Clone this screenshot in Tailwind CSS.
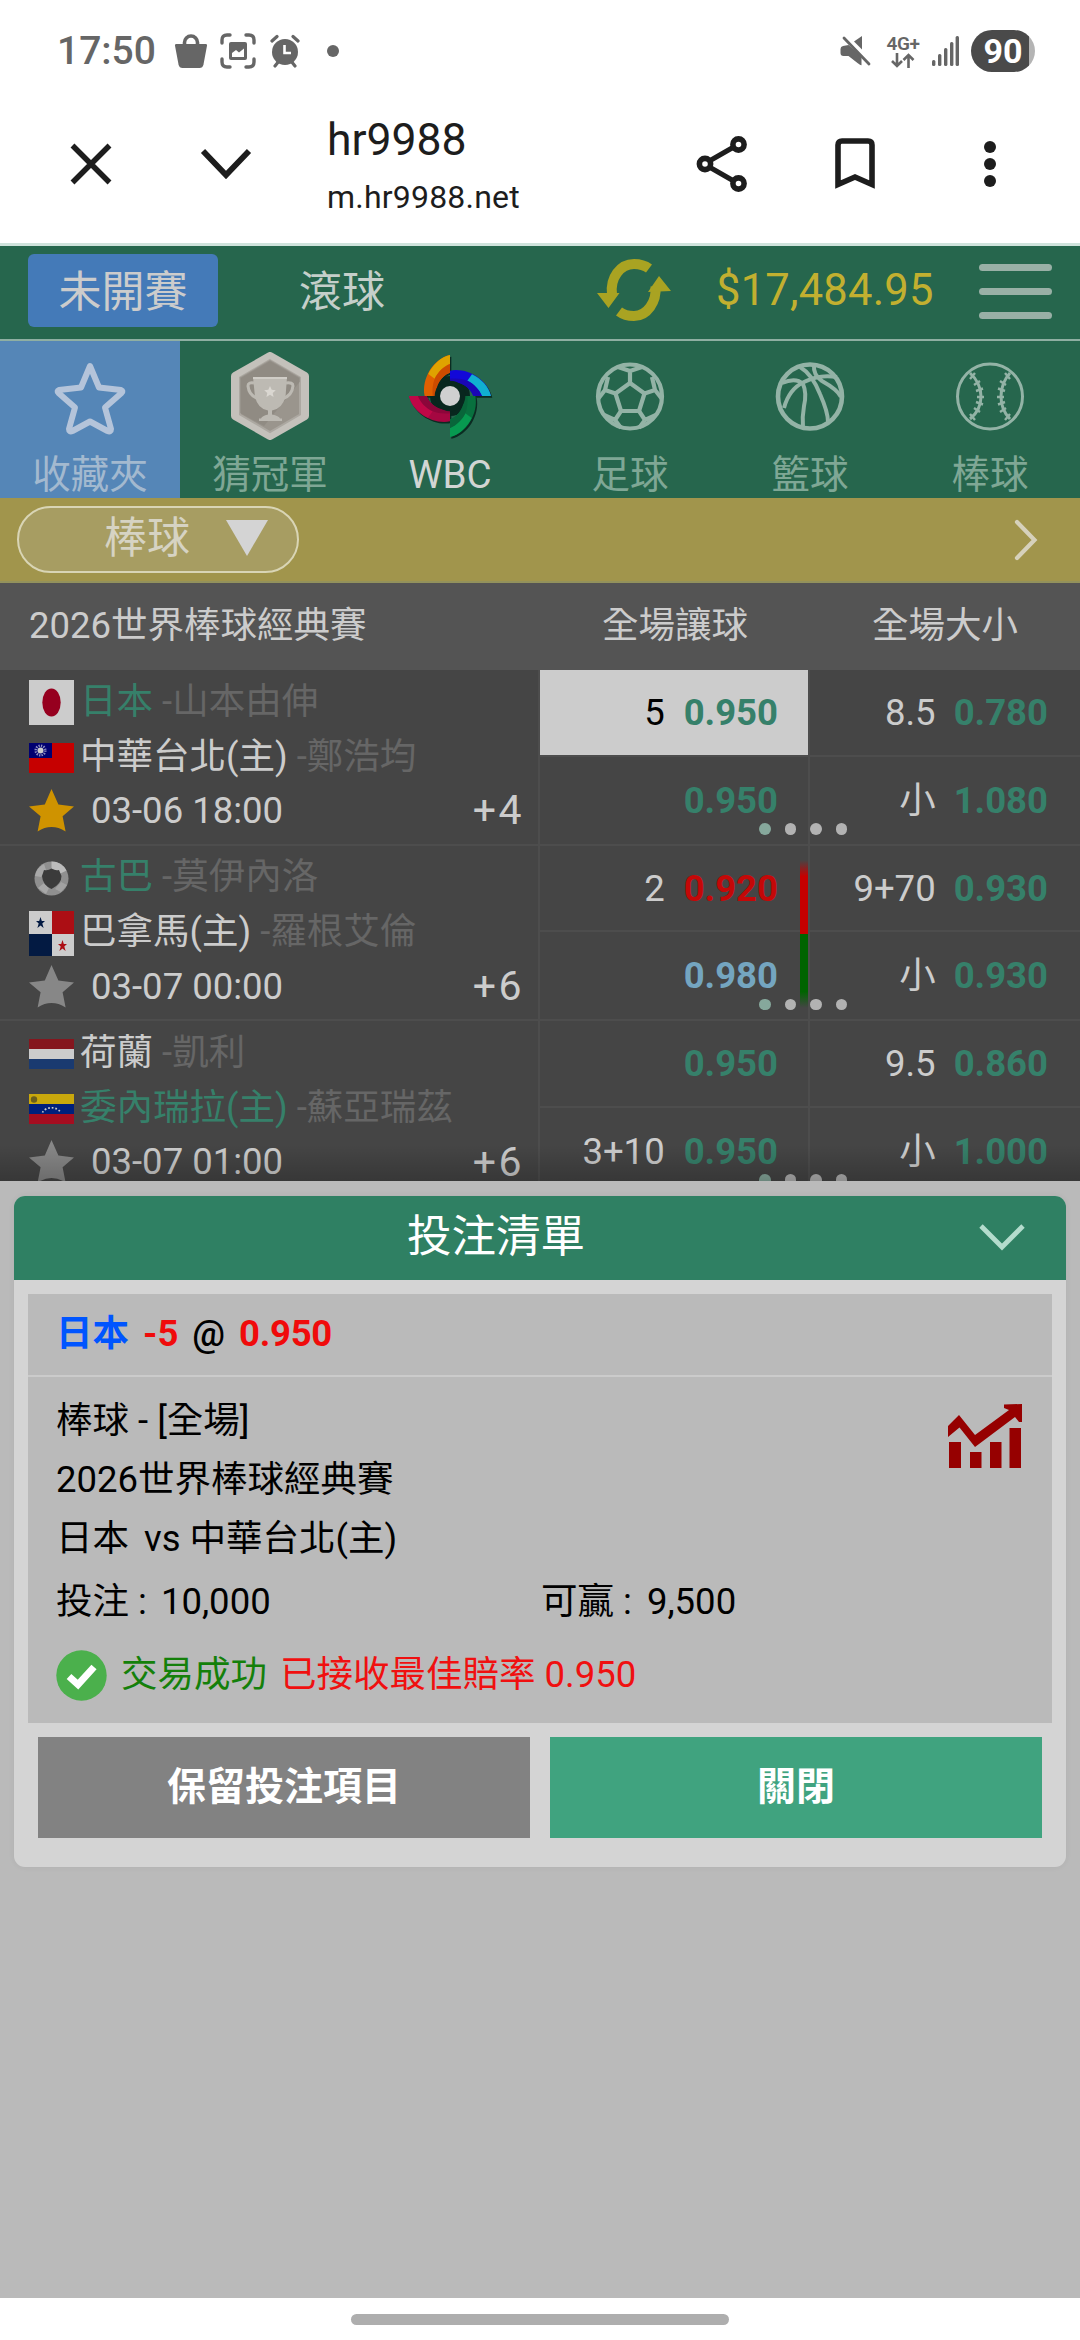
<!DOCTYPE html>
<html lang="zh-Hant">
<head>
<meta charset="utf-8">
<meta name="viewport" content="width=1080">
<title>hr9988</title>
<script src="https://cdn.jsdelivr.net/npm/@tailwindcss/browser@4"></script>
</head>
<body class="bg-white">
<svg class="hidden">
  <defs>
    <symbol id="star" viewBox="0 0 45 43"><path d="M22.5 0 L29.4 15.6 L45 17.4 L33.6 27.2 L36.6 42.5 Q22.5 33.6 8.6 42.5 L11.6 27.2 L0 17.4 L15.8 15.6 Z" fill="currentColor"/></symbol>
    <g id="blade-base"><path d="M0,-123 C-50,-112 -86,-52 -76,0 L-46,0 C-46,-30 -25,-62 0,-70 Z"/></g>
    <path id="blade-tip" d="M0,-123 C-28,-117 -53,-92 -65,-66 L-46,-52 C-36,-72 -20,-88 0,-96 Z"/>
    <path id="blade-in" d="M-46,-52 C-36,-72 -20,-88 0,-96 L0,-70 C-25,-62 -42,-35 -44,0 L-52,0 C-54,-20 -52,-36 -46,-52 Z"/>
  </defs>
</svg>
<div class="w-[1080px] h-[2340px] overflow-hidden flex flex-col font-[Roboto,'Noto_Sans_CJK_TC',sans-serif]">

  <!-- Status bar -->
  <header class="h-[102px] flex items-center shrink-0 text-[#666]">
    <div class="w-[98px] ml-[57px] text-[39px] leading-none font-medium whitespace-nowrap">17:50</div>
    <svg class="ml-[19px]" width="34" height="36" viewBox="0 0 34 36"><path d="M2 11h30q1.200 0 1 1.500l-3.500 19q-.8 3.500-4 3.500h-17q-3.200 0-4-3.500l-3.500-19Q.8 11 2 11z" fill="#666"/><path d="M10.500 13V9.500a6.500 6.500 0 0 1 13 0V13" fill="none" stroke="#666" stroke-width="3.600"/></svg>
    <svg class="ml-[12px]" width="36" height="36" viewBox="0 0 36 36"><path d="M2 10V7q0-5 5-5h3M26 2h3q5 0 5 5v3M34 26v3q0 5-5 5h-3M10 34H7q-5 0-5-5v-3" fill="none" stroke="#666" stroke-width="3.400" stroke-linecap="round"/><rect x="9" y="9" width="18" height="18" rx="2" fill="#666"/><path d="M12 24v-4l4-3 3 2.500 5-4V24z" fill="#fff"/></svg>
    <svg class="ml-[14px]" width="30" height="34" viewBox="0 0 30 34"><circle cx="15" cy="18" r="13" fill="#666"/><path d="M2 7l5-4.500M28 7l-5-4.500M5 32l4-5M25 32l-4-5" stroke="#666" stroke-width="3.200" stroke-linecap="round"/><path d="M14.500 11v8h6.500" stroke="#fff" stroke-width="2.600" fill="none"/></svg>
    <span class="ml-[27px] w-3 h-3 rounded-full bg-[#666]"></span>
    <svg class="ml-[501px]" width="32" height="32" viewBox="0 0 32 32" fill="#666"><path d="M3 11q-2.500.5-2.500 3v4q0 3 3 3h5l9 7q4 3 4 2v-9L8.500 10zM14 6.500L22 1v13.500z"/><path d="M4 3l25 26" stroke="#666" stroke-width="2.800" stroke-linecap="round"/></svg>
    <div class="ml-[14px] w-[34px] flex flex-col items-center">
      <span class="text-[19px] leading-[18px] font-semibold tracking-[-0.5px]">4G+</span>
      <svg width="26" height="15" viewBox="0 0 26 15"><path d="M7 0v13M2 8l5 5 5-5M18.500 15V2M13.500 7l5-5 5 5" fill="none" stroke="#666" stroke-width="2.600"/></svg>
    </div>
    <svg class="ml-[12px]" width="28" height="30" viewBox="0 0 28 30" fill="#666"><rect y="24" width="3.400" height="6" rx="1.500"/><rect x="6" y="18" width="3.400" height="12" rx="1.500"/><rect x="12" y="12" width="3.400" height="18" rx="1.500"/><rect x="18" y="6" width="3.400" height="24" rx="1.500"/><rect x="23.600" y="0" width="3.400" height="30" rx="1.500"/></svg>
    <div class="ml-[11px] w-[64px] h-[42px] rounded-full bg-linear-to-r from-[#4a4a4a] from-[90%] to-[#b4b4b4] to-[90%] flex items-center justify-center text-white font-bold text-[34px] leading-none">90</div>
  </header>

  <!-- Browser toolbar -->
  <div class="h-[141px] flex shrink-0 text-[#1d1d1d]">
    <svg class="ml-[70px] mt-[41px]" width="42" height="42" viewBox="0 0 42 42"><path d="M2.500 2.500l37 37M39.500 2.500l-37 37" stroke="currentColor" stroke-width="5.500"/></svg>
    <svg class="ml-[88px] mt-[45px]" width="52" height="34" viewBox="0 0 52 34"><path d="M3 4l23 24L49 4" stroke="currentColor" stroke-width="5.800" fill="none"/></svg>
    <div class="ml-[75px] w-[340px] flex flex-col">
      <span class="mt-[12px] text-[44.500px] leading-[52px]">hr9988</span>
      <span class="mt-[11px] text-[32px] leading-[40px] tracking-[0.2px]">m.hr9988.net</span>
    </div>
    <svg class="ml-[28px] mt-[32px]" width="54" height="60" viewBox="0 0 54 60" fill="none" stroke="currentColor"><path d="M44 10L9 30l35 20" stroke-width="5"/><g fill="#fff" stroke-width="5.600"><circle cx="10" cy="30" r="5.600"/><circle cx="43.500" cy="10.500" r="5.600"/><circle cx="43.500" cy="49.500" r="5.600"/></g></svg>
    <svg class="ml-[86px] mt-[36px]" width="40" height="52" viewBox="0 0 40 52"><path d="M3 46.500V7q0-4 4-4h26q4 0 4 4v39.500L20 39z" fill="none" stroke="currentColor" stroke-width="5.600"/></svg>
    <svg class="ml-[109px] mt-[38px]" width="12" height="48" viewBox="0 0 12 48" fill="currentColor"><circle cx="6" cy="7" r="6"/><circle cx="6" cy="24" r="6"/><circle cx="6" cy="41" r="6"/></svg>
  </div>

  <!-- Site header -->
  <div class="h-[98px] shrink-0 border-t-3 border-t-[#cfe3dc] border-b-2 border-b-[#8fafa2] bg-[#26664d] flex items-center box-border text-[43px] text-[#c5cfca]">
    <div class="ml-[28px] w-[190px] h-[73px] -mt-[4px] pt-[4px] rounded-[6px] bg-[#447ab8] flex items-center justify-center text-[#ccc]">未開賽</div>
    <div class="ml-[81px] w-[90px]">滾球</div>
    <svg class="ml-[208px] -mt-[5px]" width="74" height="64" viewBox="0 0 74 64"><path d="M15 36C13 20 23 6 37 6q9 0 15 4.500M58.500 28C60 44 50 58 37 58q-9 0-15-4.500" fill="none" stroke="#a9a322" stroke-width="10"/><path d="M0 35h22.500L11.500 50zM51 34L62 18l12 15z" fill="#a9a322"/></svg>
    <div class="ml-[45px] w-[218px] -mt-[4px] text-[#c2b030] text-[43.500px] tracking-[0.2px]">$17,484.95</div>
    <div class="ml-[45px] w-[73px] -mt-[3px] flex flex-col gap-[17px]">
      <i class="h-[7px] rounded-full bg-[#99b0a6]"></i><i class="h-[7px] rounded-full bg-[#99b0a6]"></i><i class="h-[7px] rounded-full bg-[#99b0a6]"></i>
    </div>
  </div>

  <!-- Sport tabs -->
  <nav class="h-[157px] shrink-0 bg-[#26664d] grid grid-cols-6 text-[38.500px] text-[#7fa795] text-center overflow-hidden">
    <div class="bg-[#5586b7] text-[#a3b9cf] flex flex-col items-center">
      <svg class="mt-[11px] h-[88px]" width="88" height="88" viewBox="0 0 88 88"><path d="M44 14l9 21.500 22 2.500q2.500 1 .5 3L59 55.500l6 21.500q0 3.500-3.500 2L44 69.500 26.500 79q-3.500 1.500-3.500-2l6-21.500L12.500 41q-2-2 .5-3l22-2.500z" fill="none" stroke="#b4c4da" stroke-width="6" stroke-linejoin="round"/></svg>
      <span class="leading-[50px] mt-[10px]">收藏夾</span>
    </div>
    <div class="flex flex-col items-center">
      <svg class="mt-[11px] h-[88px]" width="78" height="88" viewBox="0 0 78 88"><path d="M39 4L74 24v40L39 84 4 64V24z" fill="#b9b6b0" stroke="#c4c1bb" stroke-width="8" stroke-linejoin="round"/><path d="M39 8L69 25.500v37L39 80 9 62.500v-37z" fill="#9a958d" stroke="#aca8a1" stroke-width="2"/><path d="M39 8l30 17.500v4L33 74 9 61V25.500z" fill="#88837c" opacity=".55"/><path d="M23 31q-6-1-6 3 1 10 11 13M55 31q7-1 7 3-1 10-11 13" fill="none" stroke="#bdbab3" stroke-width="3"/><path d="M22 25h34l-1.500 20Q51 57 41 58.500v4q7 1.500 8 4h2V69H28v-2.500h2q1-2.500 7-4v-4Q27 57 24 45z" fill="#bdbab3"/><path d="M22 26h34" stroke="#d0cdc7" stroke-width="2"/><path d="M39 34l1.700 3.800 4.100.4-3.100 2.700.9 4-3.600-2.100-3.600 2.100.9-4-3.100-2.700 4.100-.4z" fill="#dad7d1"/></svg>
      <span class="leading-[50px] mt-[10px]">猜冠軍</span>
    </div>
    <div class="flex flex-col items-center text-[#d2d5d3]">
      <svg class="mt-[11px] h-[88px]" width="88" height="88" viewBox="-132 -132 264 264">
        <g fill="#0b2c22" transform="translate(4,5)"><use href="#blade-base"/><use href="#blade-base" transform="rotate(90)"/><use href="#blade-base" transform="rotate(180)"/><use href="#blade-base" transform="rotate(270)"/></g>
        <circle r="60" fill="#08271e"/>
        <g fill="#e06000"><use href="#blade-base"/></g><use href="#blade-tip" fill="#dfa300"/><use href="#blade-in" fill="#cc4c00"/>
        <g transform="rotate(90)"><g fill="#1208d8"><use href="#blade-base"/></g><use href="#blade-tip" fill="#10b0d0"/><use href="#blade-in" fill="#1a06b4"/></g>
        <g transform="rotate(180)"><g fill="#08703e"><use href="#blade-base"/></g><use href="#blade-tip" fill="#079a50"/><use href="#blade-in" fill="#08663a"/></g>
        <g transform="rotate(270)"><g fill="#a50741"><use href="#blade-base"/></g><use href="#blade-tip" fill="#c00747"/><use href="#blade-in" fill="#8c063a"/></g>
        <circle r="46" fill="#08271e"/>
        <circle r="30" fill="#d0d0d0"/>
      </svg>
      <span class="leading-[50px] mt-[10px]">WBC</span>
    </div>
    <div class="flex flex-col items-center">
      <svg class="mt-[11px] h-[88px]" width="88" height="88" viewBox="0 0 88 88" fill="none" stroke="#93b3a6" stroke-width="4.200" stroke-linejoin="round"><circle cx="44" cy="44.500" r="32"/><path d="M44 31l14.500 10.500L53 59H35l-5.500-17.500z"/><path d="M44 31V19M58.500 41.500L69 38M53 59l6 9M35 59l-6 9M29.500 41.500L19 38M32 15l12 4 12-4M69 38l-3-13M69 38l7 9M59 68l11-5M59 68l-6 8M29 68l-11-5M29 68l6 8M19 38l-7 9M19 38l3-13"/></svg>
      <span class="leading-[50px] mt-[10px]">足球</span>
    </div>
    <div class="flex flex-col items-center">
      <svg class="mt-[11px] h-[88px]" width="88" height="88" viewBox="0 0 88 88" fill="none" stroke="#93b3a6" stroke-width="4"><circle cx="44" cy="44.500" r="32" stroke-width="4.600"/><path d="M16 31q14-6 21 1 4 9 1 22-2 11-1 22M34 15q12 7 20 27 8 18 8 28M48 13q-1 10 8 16 16 9 19 16M18 56q5-19 20-26 15-8 33-5"/></svg>
      <span class="leading-[50px] mt-[10px]">籃球</span>
    </div>
    <div class="flex flex-col items-center">
      <svg class="mt-[11px] h-[88px]" width="88" height="88" viewBox="0 0 88 88" fill="none" stroke="#93b3a6" stroke-width="3"><circle cx="44" cy="44.500" r="32.500"/><path d="M24 21q11 10 11 23.500T24 67M64 21q-9 10-9 23.500T64 67"/><path d="M24 27l5-6M28 33l6-4M30 39l7-2.500M31 45h7M30 50l7 2.500M28 56l6 4M24 62l5 6M64 27l-5-6M60 33l-6-4M59 39l-7-2.500M58 45h-7M59 50l-7 2.500M60 56l-6 4M64 62l-5 6" stroke-width="2.400"/></svg>
      <span class="leading-[50px] mt-[10px]">棒球</span>
    </div>
  </nav>

  <!-- Sport filter -->
  <div class="h-[85px] shrink-0 bg-[#a1954c] border-b-2 border-[#93925c] flex items-center justify-between">
    <div class="ml-[17px] w-[282px] h-[67px] rounded-full border-2 border-[#d9d5b5] bg-[#a79d62] flex items-center text-[#d6d3c3] text-[43px]">
      <span class="ml-[85px] -mt-[2px]">棒球</span>
      <svg class="ml-[36px] -mt-[3px]" width="42" height="36" viewBox="0 0 42 36"><path d="M0 0h42L21 36z" fill="#d4d4d4"/></svg>
    </div>
    <svg class="mr-[42px]" width="24" height="42" viewBox="0 0 24 42"><path d="M3 3l17.500 18L3 39" fill="none" stroke="#d6d1bb" stroke-width="4.200" stroke-linecap="round"/></svg>
  </div>

  <!-- Odds table -->
  <div class="relative h-[598px] shrink-0 overflow-hidden bg-[#454545] text-[36.500px] text-[#ccc]">
    <div class="h-[87px] bg-[#545454] grid grid-cols-[540px_270px_270px] items-center text-center leading-[60px]">
      <div class="pl-[29px] pb-px text-left">2026世界棒球經典賽</div><div class="pb-px">全場讓球</div><div class="pb-px">全場大小</div>
    </div>

    <div class="relative grid grid-cols-[540px_270px_270px] h-[175.500px]">
      <div class="border-r-2 border-b-2 border-[#4d4d4d] pl-[29px] pt-[3px] leading-[55px]">
        <div class="h-[55px] flex items-center gap-[6px] whitespace-pre"><svg width="45" height="45" class="mt-1"><path d="M0 0h45v45H0z" fill="#ccc"/><ellipse cx="22.500" cy="22.500" rx="9.200" ry="14" fill="#96001f"/></svg><span class="mt-px text-[#36806a]">日本 <span class="text-[#666]">-山本由伸</span></span></div>
        <div class="h-[55px] flex items-center gap-[6px] whitespace-pre"><svg width="45" height="30" class="mt-1"><path d="M0 0h45v30H0z" fill="#c60000"/><path d="M0 0h23v15H0z" fill="#000070"/><circle cx="11.500" cy="7.500" r="4.800" fill="none" stroke="#8c8cc0" stroke-width="2.500" stroke-dasharray="1.300 1.200"/><circle cx="11.500" cy="7.500" r="3" fill="#ccc"/></svg><span class="mt-px">中華台北(主) <span class="text-[#666]">-鄭浩均</span></span></div>
        <div class="h-[55px] flex items-center"><svg width="45" height="43" class="text-[#cf9300]"><use href="#star"/></svg><span class="ml-[17px]">03-06 18:00</span><span class="ml-auto mr-[14px] text-[41px] tracking-[2.500px]">+4</span></div>
      </div>
      <div class="grid grid-rows-2 border-r-2 border-b-2 border-[#4d4d4d] text-right">
        <div class="bg-[#ccc] text-black border-b-2 border-[#4d4d4d] flex items-center justify-end gap-[19px] pt-[2px] pr-[30px]"><span>5</span><b class="text-[#36806a]">0.950</b></div>
        <div class="flex items-center justify-end pt-[2px] pr-[30px]"><b class="text-[#36806a]">0.950</b></div>
      </div>
      <div class="grid grid-rows-2 border-b-2 border-[#4d4d4d]">
        <div class="border-b-2 border-[#4d4d4d] flex items-center justify-end gap-[18px] pt-[2px] pr-[32px]"><span>8.5</span><b class="text-[#36806a]">0.780</b></div>
        <div class="flex items-center justify-end gap-[18px] pt-[2px] pr-[32px]"><span>小</span><b class="text-[#36806a]">1.080</b></div>
      </div>
      <div class="absolute left-[759px] top-[153px] flex gap-[14px]"><i class="size-[11.500px] rounded-full bg-[#86a89c]"></i><i class="size-[11.500px] rounded-full bg-[#b2b2b2]"></i><i class="size-[11.500px] rounded-full bg-[#b2b2b2]"></i><i class="size-[11.500px] rounded-full bg-[#b2b2b2]"></i></div>
    </div>

    <div class="relative grid grid-cols-[540px_270px_270px] h-[175.500px]">
      <div class="border-r-2 border-b-2 border-[#4d4d4d] pl-[29px] pt-[3px] leading-[55px]">
        <div class="h-[55px] flex items-center gap-[6px] whitespace-pre"><svg width="45" height="45" class="mt-1"><circle cx="22.500" cy="22.500" r="17" fill="#8f8f8f"/><path d="M22.500 5.500a17 17 0 0 1 15 9l-6 3q-4-4-9-4.500z" fill="#bcbcbc"/><path d="M6 20a17 17 0 0 1 9-12l2 6-5 7zM9 32l6-5 5 5-3 6z" fill="#a8a8a8"/><path d="M32 26l6 3-6 7-6-3z" fill="#a2a2a2"/><path d="M15 14q4 1 7.500-1.500Q26 15 30 14l2.500 6q0 8-10 13-9-4-9.500-13z" fill="#3b3b3b"/></svg><span class="mt-px text-[#36806a]">古巴 <span class="text-[#666]">-莫伊內洛</span></span></div>
        <div class="h-[55px] flex items-center gap-[6px] whitespace-pre"><svg width="45" height="45" class="mt-1"><path d="M0 0h45v45H0z" fill="#ccc"/><path d="M23 0h22v23H23z" fill="#ac0e14"/><path d="M0 23h23v22H0z" fill="#031a42"/><path d="M11.500 6l1.300 4H16l-2.700 2.600 1.300 4.400-3.100-2.600-3.100 2.600 1.300-4.400L7 10h3.200z" fill="#031a42"/><path d="M33.500 29l1.300 4H38l-2.700 2.600 1.300 4.400-3.100-2.600-3.100 2.600 1.300-4.400L29 33h3.200z" fill="#ac0e14"/></svg><span class="mt-px">巴拿馬(主) <span class="text-[#666]">-羅根艾倫</span></span></div>
        <div class="h-[55px] flex items-center"><svg width="45" height="43" class="text-[#878787]"><use href="#star"/></svg><span class="ml-[17px]">03-07 00:00</span><span class="ml-auto mr-[14px] text-[41px] tracking-[2.500px]">+6</span></div>
      </div>
      <div class="grid grid-rows-2 border-r-2 border-b-2 border-[#4d4d4d]">
        <div class="border-b-2 border-[#4d4d4d] flex items-center justify-end gap-[19px] pt-[2px] pr-[30px]"><span>2</span><b class="text-[#c40808]">0.920</b></div>
        <div class="flex items-center justify-end pt-[2px] pr-[30px]"><b class="text-[#74a5c0]">0.980</b></div>
      </div>
      <div class="grid grid-rows-2 border-b-2 border-[#4d4d4d]">
        <div class="border-b-2 border-[#4d4d4d] flex items-center justify-end gap-[18px] pt-[2px] pr-[32px]"><span>9+70</span><b class="text-[#36806a]">0.930</b></div>
        <div class="flex items-center justify-end gap-[18px] pt-[2px] pr-[32px]"><span>小</span><b class="text-[#36806a]">0.930</b></div>
      </div>
      <div class="absolute left-[800px] top-[14px] w-2 h-[148px]"><div class="h-1/2 bg-linear-to-t from-[#c60000] from-[78%] to-transparent"></div><div class="h-1/2 bg-linear-to-b from-[#006400] from-[78%] to-transparent"></div></div>
      <div class="absolute left-[759px] top-[153px] flex gap-[14px]"><i class="size-[11.500px] rounded-full bg-[#86a89c]"></i><i class="size-[11.500px] rounded-full bg-[#b2b2b2]"></i><i class="size-[11.500px] rounded-full bg-[#b2b2b2]"></i><i class="size-[11.500px] rounded-full bg-[#b2b2b2]"></i></div>
    </div>

    <div class="relative grid grid-cols-[540px_270px_270px] h-[175.500px]">
      <div class="border-r-2 border-b-2 border-[#4d4d4d] pl-[29px] pt-[3px] leading-[55px]">
        <div class="h-[55px] flex items-center gap-[6px] whitespace-pre"><svg width="45" height="30" class="mt-1"><path d="M0 0h45v10H0z" fill="#85161e"/><path d="M0 10h45v10H0z" fill="#ccc"/><path d="M0 20h45v10H0z" fill="#1a3a70"/></svg><span class="mt-px">荷蘭 <span class="text-[#666]">-凱利</span></span></div>
        <div class="h-[55px] flex items-center gap-[6px] whitespace-pre"><svg width="45" height="30" class="mt-1"><path d="M0 0h45v10H0z" fill="#c9a80c"/><path d="M0 10h45v10H0z" fill="#00207c"/><path d="M0 20h45v10H0z" fill="#a50d20"/><path d="M13.500 18.500a9.500 7 0 0 1 18 0" fill="none" stroke="#ccc" stroke-width="1.700" stroke-dasharray="1.700 1.900"/><circle cx="5" cy="5.500" r="3.200" fill="#6b5f1c"/></svg><span class="mt-px text-[#36806a]">委內瑞拉(主) <span class="text-[#666]">-蘇亞瑞茲</span></span></div>
        <div class="h-[55px] flex items-center"><svg width="45" height="43" class="text-[#878787]"><use href="#star"/></svg><span class="ml-[17px] leading-[36px]">03-07 01:00</span><span class="ml-auto mr-[14px] leading-[36px] text-[41px] tracking-[2.500px]">+6</span></div>
      </div>
      <div class="grid grid-rows-2 border-r-2 border-b-2 border-[#4d4d4d]">
        <div class="border-b-2 border-[#4d4d4d] flex items-center justify-end pt-[2px] pr-[30px]"><b class="text-[#36806a]">0.950</b></div>
        <div class="flex items-center justify-end gap-[19px] pt-[2px] pr-[30px]"><span>3+10</span><b class="text-[#36806a]">0.950</b></div>
      </div>
      <div class="grid grid-rows-2 border-b-2 border-[#4d4d4d]">
        <div class="border-b-2 border-[#4d4d4d] flex items-center justify-end gap-[18px] pt-[2px] pr-[32px]"><span>9.5</span><b class="text-[#36806a]">0.860</b></div>
        <div class="flex items-center justify-end gap-[18px] pt-[2px] pr-[32px]"><span>小</span><b class="text-[#36806a]">1.000</b></div>
      </div>
      <div class="absolute left-[759px] top-[153px] flex gap-[14px]"><i class="size-[11.500px] rounded-full bg-[#86a89c]"></i><i class="size-[11.500px] rounded-full bg-[#b2b2b2]"></i><i class="size-[11.500px] rounded-full bg-[#b2b2b2]"></i><i class="size-[11.500px] rounded-full bg-[#b2b2b2]"></i></div>
    </div>
    <div class="absolute inset-x-0 bottom-0 h-[36px] bg-linear-to-t from-black/20 to-transparent"></div>
  </div>

  <!-- Bet slip sheet -->
  <section class="h-[1117px] shrink-0 bg-[#bababa] px-[14px] pt-[15px]">
    <div class="h-[671px] rounded-[11px] bg-[#d4d4d4] overflow-hidden shadow-[0_0_6px_rgba(0,0,0,0.06)] text-[36.500px] text-black">
      <div class="h-[84px] bg-[#2f8063] text-white text-[44.500px] flex items-center">
        <span class="ml-[393px] w-[178px] -mt-[2px] whitespace-nowrap">投注清單</span>
        <svg class="ml-[393px] -mt-[2px]" width="48" height="30" viewBox="0 0 48 30"><path d="M3 4l21 21L45 4" fill="none" stroke="#b4dccd" stroke-width="4.800"/></svg>
      </div>
      <div class="mx-[14px] mt-[14px] h-[429px] bg-[#bababa]">
        <div class="h-[83px] border-b-2 border-[#cbcbcb] pl-[28px] flex items-center"><span class="whitespace-pre"><b class="text-[#0055ff]">日本</b><b class="ml-[14px] text-[#f00b0b]">-5</b><span class="ml-[14px] font-medium">@</span><b class="ml-[14px] tracking-[-0.300px] text-[#f00b0b]">0.950</b></span></div>
        <div class="relative px-[28px] leading-[59px] pt-[14px]">
          <div>棒球 - [全場]</div>
          <div>2026世界棒球經典賽</div>
          <div class="flex"><span>日本</span><span class="ml-[15px]">vs</span><span class="ml-[9px]">中華台北(主)</span></div>
          <div class="mt-[4px] flex"><span class="w-[485px]">投注 :<span class="ml-[14px]">10,000</span></span><span>可贏 :<span class="ml-[15px]">9,500</span></span></div>
          <div class="mt-[14px] flex items-center"><svg class="mt-px" width="51" height="51" viewBox="0 0 51 51"><circle cx="25.500" cy="25.500" r="25.200" fill="#4bb04c"/><path d="M13 26.500l9 8L38 17" fill="none" stroke="#fff" stroke-width="7"/></svg><span class="ml-[14px] text-[#14800a]">交易成功</span><span class="ml-[13px] text-[#f01010]">已接收最佳賠率 0.950</span></div>
          <svg class="absolute left-[919px] top-[25px]" width="76" height="68" viewBox="0 0 76 68" fill="#960000"><path d="M1 24L12 13l16 20L62 8l-5-2V2.500L75 2v18h-3l-4-5L28 45 12.500 25.500 1 35zM2 40h12v26H2zM23 50h11.500v16H23zM43 40h11.500v26H43zM62.500 26H74v40H62.500z"/></svg>
        </div>
      </div>
      <div class="mt-[14px] px-[24px] grid grid-cols-2 gap-[20px] text-white text-[39px] font-bold">
        <div class="h-[101px] bg-[#828282] flex items-center justify-center">保留投注項目</div>
        <div class="h-[101px] bg-[#40a37f] flex items-center justify-center">關閉</div>
      </div>
    </div>
  </section>

  <!-- Gesture bar -->
  <footer class="h-[42px] shrink-0 bg-white pt-[16px]"><div class="mx-auto w-[378px] h-[11px] rounded-full bg-[#aeaeae]"></div></footer>
</div>
</body>
</html>
